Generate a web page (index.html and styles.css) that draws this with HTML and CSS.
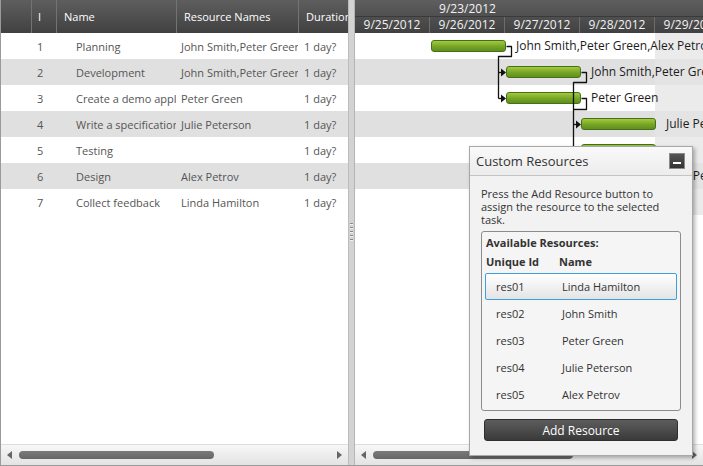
FILE: index.html
```html
<!DOCTYPE html>
<html>
<head>
<meta charset="utf-8">
<link rel="stylesheet" href="styles.css">
</head>
<body>
<div class="app">
  <div class="grid-pane">
    <div class="head grid-head">
      <div class="hc hc-ind"></div>
      <div class="hc hc-id">I</div>
      <div class="hc">Name</div>
      <div class="hc">Resource Names</div>
      <div class="hc">Duration</div>
    </div>
    <div class="grid-body">
      <div class="row"><span></span><span class="c-id">1</span><span class="c-name">Planning</span><span class="c-res">John Smith,Peter Green,Alex Petrov</span><span class="c-dur">1 day?</span></div>
      <div class="row"><span></span><span class="c-id">2</span><span class="c-name">Development</span><span class="c-res">John Smith,Peter Green</span><span class="c-dur">1 day?</span></div>
      <div class="row"><span></span><span class="c-id">3</span><span class="c-name">Create a demo application</span><span class="c-res">Peter Green</span><span class="c-dur">1 day?</span></div>
      <div class="row"><span></span><span class="c-id">4</span><span class="c-name">Write a specification</span><span class="c-res">Julie Peterson</span><span class="c-dur">1 day?</span></div>
      <div class="row"><span></span><span class="c-id">5</span><span class="c-name">Testing</span><span class="c-res"></span><span class="c-dur">1 day?</span></div>
      <div class="row"><span></span><span class="c-id">6</span><span class="c-name">Design</span><span class="c-res">Alex Petrov</span><span class="c-dur">1 day?</span></div>
      <div class="row"><span></span><span class="c-id">7</span><span class="c-name">Collect feedback</span><span class="c-res">Linda Hamilton</span><span class="c-dur">1 day?</span></div>
    </div>
    <div class="hscroll">
      <span class="arr arr-l"></span>
      <span class="thumb thumb-grid"></span>
      <span class="spacer"></span>
      <span class="arr arr-r"></span>
    </div>
  </div>

  <div class="splitter"><div class="grip"></div></div>

  <div class="gantt-pane">
    <div class="head gantt-head">
      <div class="tl-week"><div class="week">9/23/2012</div></div>
      <div class="tl-days">
        <div class="day">9/23/2012</div>
        <div class="day">9/24/2012</div>
        <div class="day">9/25/2012</div>
        <div class="day">9/26/2012</div>
        <div class="day">9/27/2012</div>
        <div class="day">9/28/2012</div>
        <div class="day">9/29/2012</div>
      </div>
    </div>
    <div class="gantt-body">
      <div class="grow"><div class="wk"></div><div class="bar" style="left:76px"></div><span class="lbl" style="left:161px">John Smith,Peter Green,Alex Petrov</span></div>
      <div class="grow"><div class="wk"></div><div class="bar" style="left:151px"></div><span class="lbl" style="left:236px">John Smith,Peter Green</span></div>
      <div class="grow"><div class="wk"></div><div class="bar" style="left:151px"></div><span class="lbl" style="left:236px">Peter Green</span></div>
      <div class="grow"><div class="wk"></div><div class="bar" style="left:226px"></div><span class="lbl" style="left:311px">Julie Peterson</span></div>
      <div class="grow"><div class="wk"></div><div class="bar" style="left:226px"></div></div>
      <div class="grow"><div class="wk"></div><div class="bar" style="left:226px"></div><span class="lbl" style="left:311px">Alex Petrov</span></div>
      <div class="grow"><div class="wk"></div><div class="bar" style="left:151px"></div><span class="lbl" style="left:236px">Linda Hamilton</span></div>
      <svg class="links" width="349" height="200" viewBox="0 0 349 200">
        <g fill="none" stroke="#111" stroke-width="1.3" stroke-linejoin="round">
          <path d="M151.5 13.5 H156.5 V23.5 H143.5 V65.5"/>
          <path d="M143.5 39.5 H147"/>
          <path d="M143.5 65.5 H147"/>
          <path d="M226.5 39.5 H231.5 V49.5 H218.5 V143.5"/>
          <path d="M226.5 65.5 H231.5 V76.5 H218.5"/>
          <path d="M218.5 91.5 H222"/>
          <path d="M218.5 117.5 H222"/>
          <path d="M218.5 143.5 H222"/>
        </g>
        <g fill="#111">
          <path d="M146 35.5 L151 39.5 L146 43.5 Z"/>
          <path d="M146 61.5 L151 65.5 L146 69.5 Z"/>
          <path d="M221 87.5 L226 91.5 L221 95.5 Z"/>
          <path d="M221 113.5 L226 117.5 L221 121.5 Z"/>
          <path d="M221 139.5 L226 143.5 L221 147.5 Z"/>
        </g>
      </svg>
    </div>
    <div class="hscroll">
      <span class="arr arr-l"></span>
      <span class="thumb thumb-gantt"></span>
      <span class="spacer"></span>
      <span class="arr arr-r"></span>
    </div>
  </div>

  <div class="popup">
    <div class="pop-head">
      <span class="pop-title">Custom Resources</span>
      <span class="min-btn"><span class="min-bar"></span></span>
    </div>
    <div class="pop-body">
      <p class="pop-text">Press the Add Resource button to<br>assign the resource to the selected<br>task.</p>
      <div class="res-box">
        <div class="res-title">Available Resources:</div>
        <div class="res-head"><span>Unique Id</span><span>Name</span></div>
        <div class="res-list">
          <div class="res-item selected"><span>res01</span><span>Linda Hamilton</span></div>
          <div class="res-item"><span>res02</span><span>John Smith</span></div>
          <div class="res-item"><span>res03</span><span>Peter Green</span></div>
          <div class="res-item"><span>res04</span><span>Julie Peterson</span></div>
          <div class="res-item"><span>res05</span><span>Alex Petrov</span></div>
        </div>
      </div>
      <button class="add-btn">Add Resource</button>
    </div>
  </div>
</div>
</body>
</html>
```
FILE: styles.css
```css
* { box-sizing: border-box; }
body { margin: 0; font-family: "Open Sans", "Noto Sans", sans-serif; }

.app {
  position: relative;
  width: 703px;
  height: 466px;
  display: flex;
  overflow: hidden;
  border-left: 1px solid #9a9a9a;
  border-bottom: 1px solid #9a9a9a;
  background: #fff;
}

.head {
  background: linear-gradient(#5e5e5e, #414141);
  color: #fff;
  flex: none;
}

/* left grid */
.grid-pane {
  width: 347px;
  display: flex;
  flex-direction: column;
  flex: none;
}
.grid-head {
  height: 33px;
  display: grid;
  grid-template-columns: 30px 25px 120px 122px 1fr;
}
.hc {
  border-left: 1px solid #737373;
  padding-left: 7px;
  display: flex;
  align-items: center;
  font-size: 11px;
  white-space: nowrap;
  overflow: hidden;
}
.hc-ind { border-left: none; }
.hc-id { padding-left: 6px; }

.grid-body { flex: 1; }
.row {
  height: 26px;
  display: grid;
  grid-template-columns: 30px 25px 120px 122px 1fr;
  align-items: center;
  font-size: 11px;
  color: #555;
}
.row:nth-child(even) { background: #e0e0e0; }
.row span { white-space: nowrap; overflow: hidden; }
.c-id { padding-left: 6px; }
.c-name { padding-left: 20px; }
.c-res { padding-left: 5px; }
.c-dur { padding-left: 6px; }

/* scrollbars */
.hscroll {
  height: 21px;
  flex: none;
  display: flex;
  align-items: center;
  padding: 0 6px;
  background: linear-gradient(#f7f7f7, #e3e3e3);
  border-top: 1px solid #dedede;
}
.arr { width: 0; height: 0; border-top: 4px solid transparent; border-bottom: 4px solid transparent; flex: none; }
.arr-l { border-right: 5px solid #666; }
.arr-r { border-left: 5px solid #666; }
.thumb { height: 8px; border-radius: 4px; background: linear-gradient(#7a7a7a, #666); flex: none; }
.thumb-grid { width: 195px; margin-left: 7px; }
.thumb-gantt { width: 200px; margin-left: 7px; }
.spacer { flex: 1; }

/* splitter */
.splitter {
  width: 7px;
  flex: none;
  background: #d3d3d3;
  border-left: 1px solid #bcbcbc;
  border-right: 1px solid #b5b5b5;
  display: flex;
  justify-content: center;
  align-items: center;
}
.grip {
  width: 3px;
  height: 19px;
  background: repeating-linear-gradient(#8a8a8a 0 1px, #f0f0f0 1px 2px, transparent 2px 4px);
}

/* gantt */
.gantt-pane {
  flex: 1;
  display: flex;
  flex-direction: column;
  overflow: hidden;
}
.gantt-head { height: 33px; overflow: hidden; font-size: 12px; color: #f2f2f2; }
.tl-week { height: 17px; border-bottom: 1px solid #3a3a3a; margin-left: -150px; display: flex; }
.week { width: 525px; text-align: center; line-height: 17px; flex: none; }
.tl-days { height: 16px; margin-left: -150px; display: flex; }
.day {
  width: 75px;
  flex: none;
  text-align: center;
  line-height: 15px;
  border-right: 1px solid #6c6c6c;
}

.gantt-body { flex: 1; position: relative; }
.grow { height: 26px; position: relative; }
.grow:nth-child(even) { background: #e0e0e0; }
.wk { position: absolute; left: 300px; top: 0; width: 75px; height: 100%; background: #ebebeb; }
.grow:nth-child(even) .wk { background: #e4e4e4; }
.bar {
  position: absolute;
  top: 7px;
  width: 75px;
  height: 12px;
  border: 1px solid #44701a;
  border-radius: 3px;
  background: linear-gradient(#a3c93e, #76a526 55%, #5f8f1d);
}
.lbl {
  position: absolute;
  top: 0;
  line-height: 26px;
  font-size: 12px;
  color: #1c1c1c;
  white-space: nowrap;
}
.links { position: absolute; left: 0; top: 0; }

/* popup */
.popup {
  position: absolute;
  left: 468px;
  top: 146px;
  width: 224px;
  height: 310px;
  border: 1px solid #a8a8a8;
  background: #f2f2f2;
  box-shadow: 2px 2px 4px rgba(0,0,0,0.3);
  display: flex;
  flex-direction: column;
}
.pop-head {
  height: 29px;
  flex: none;
  display: flex;
  align-items: center;
  justify-content: space-between;
  padding: 0 7px 0 6px;
  background: linear-gradient(#f9f9f9, #ececec);
  border-bottom: 1px solid #c4c4c4;
}
.pop-title { font-size: 13px; color: #333; }
.min-btn {
  width: 16px;
  height: 16px;
  background: linear-gradient(#555, #333);
  border: 1px solid #8a8a8a;
  display: flex;
  align-items: flex-end;
  justify-content: center;
  padding-bottom: 4px;
}
.min-bar { width: 8px; height: 2px; background: #fff; }

.pop-body { padding: 11px 11px 0; }
.pop-text { margin: 0; font-size: 11px; line-height: 13px; color: #333; }
.res-box {
  margin-top: 5px;
  height: 180px;
  border: 1px solid #8c8c8c;
  border-radius: 3px;
  padding: 1px 3px 0;
  background: #f5f5f5;
}
.res-title, .res-head {
  font-size: 11px;
  font-weight: bold;
  color: #333;
  line-height: 19px;
  padding-left: 1px;
}
.res-head { display: grid; grid-template-columns: 73px 1fr; }
.res-list { margin-top: 2px; }
.res-item {
  height: 27px;
  display: grid;
  grid-template-columns: 66px 1fr;
  align-items: center;
  padding-left: 10px;
  font-size: 11px;
  color: #333;
  border: 1px solid transparent;
}
.res-item.selected {
  border-color: #3d9fdc;
  border-radius: 2px;
  background: linear-gradient(#ffffff, #e4e4e4);
}
.add-btn {
  display: block;
  margin: 8px 3px 0;
  width: 194px;
  height: 22px;
  border: 1px solid #2e2e2e;
  border-radius: 3px;
  background: linear-gradient(#5d5d5d, #3a3a3a);
  color: #fff;
  font-family: inherit;
  font-size: 12px;
  padding: 0;
}
```
